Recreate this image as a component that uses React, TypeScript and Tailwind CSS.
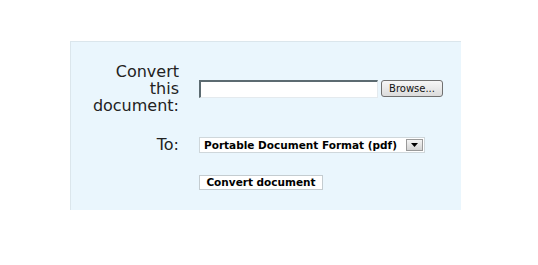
import React from 'react';

const App: React.FC = () => {
  return (
    <div className="w-[538px] h-[265px] bg-white pt-[41px] pl-[70px] font-['DejaVu_Sans',Verdana,sans-serif]">
      <div className="w-[391px] h-[169px] bg-[#eaf6fd] border-t border-l border-[#dbe6ec] pt-[21px]">
        <div className="grid grid-cols-[108px_auto] gap-x-[20px] items-center">
          {/* Convert this document */}
          <div className="text-right text-[16px] leading-[17px] text-[#222] pl-[20px]">
            Convert
            <br />
            this
            <br />
            document:
          </div>
          <div className="flex items-center">
            <div className="w-[179px] h-[18px] bg-white border-t-2 border-l-2 border-[#5c6b71] border-b border-r border-b-[#e4eaee] border-r-[#e4eaee]" />
            <button className="ml-[3px] w-[62px] h-[17px] rounded-[3px] border border-[#707070] bg-gradient-to-b from-[#f6f6f6] to-[#dcdcdc] text-[10px] leading-[15px] text-[#111] font-['DejaVu_Sans',Tahoma,sans-serif]">
              Browse...
            </button>
          </div>

          {/* To */}
          <div className="mt-[22px] text-right text-[16px] leading-[17px] text-[#222]">To:</div>
          <div className="mt-[22px] flex items-center">
            <div className="w-[226px] h-[16px] bg-white border border-[#cfd7db] flex items-center justify-between">
              <span className="pl-[4px] text-[10.5px] font-bold leading-[14px] text-black whitespace-nowrap">
                Portable Document Format (pdf)
              </span>
              <span className="mr-[1px] w-[17px] h-[12px] border border-[#9a9a9a] bg-gradient-to-b from-[#f4f4f4] to-[#d4d4d4] flex items-center justify-center">
                <svg width="7" height="4" viewBox="0 0 7 4">
                  <path d="M0 0 L7 0 L3.5 4 Z" fill="#000" />
                </svg>
              </span>
            </div>
          </div>

          {/* Convert button */}
          <div className="mt-[16px]" />
          <div className="mt-[16px]">
            <button className="w-[124px] h-[15px] bg-white border border-[#c4ccd0] text-[10.5px] font-bold leading-[13px] text-black whitespace-nowrap">
              Convert document
            </button>
          </div>
        </div>
      </div>
    </div>
  );
};

export default App;
